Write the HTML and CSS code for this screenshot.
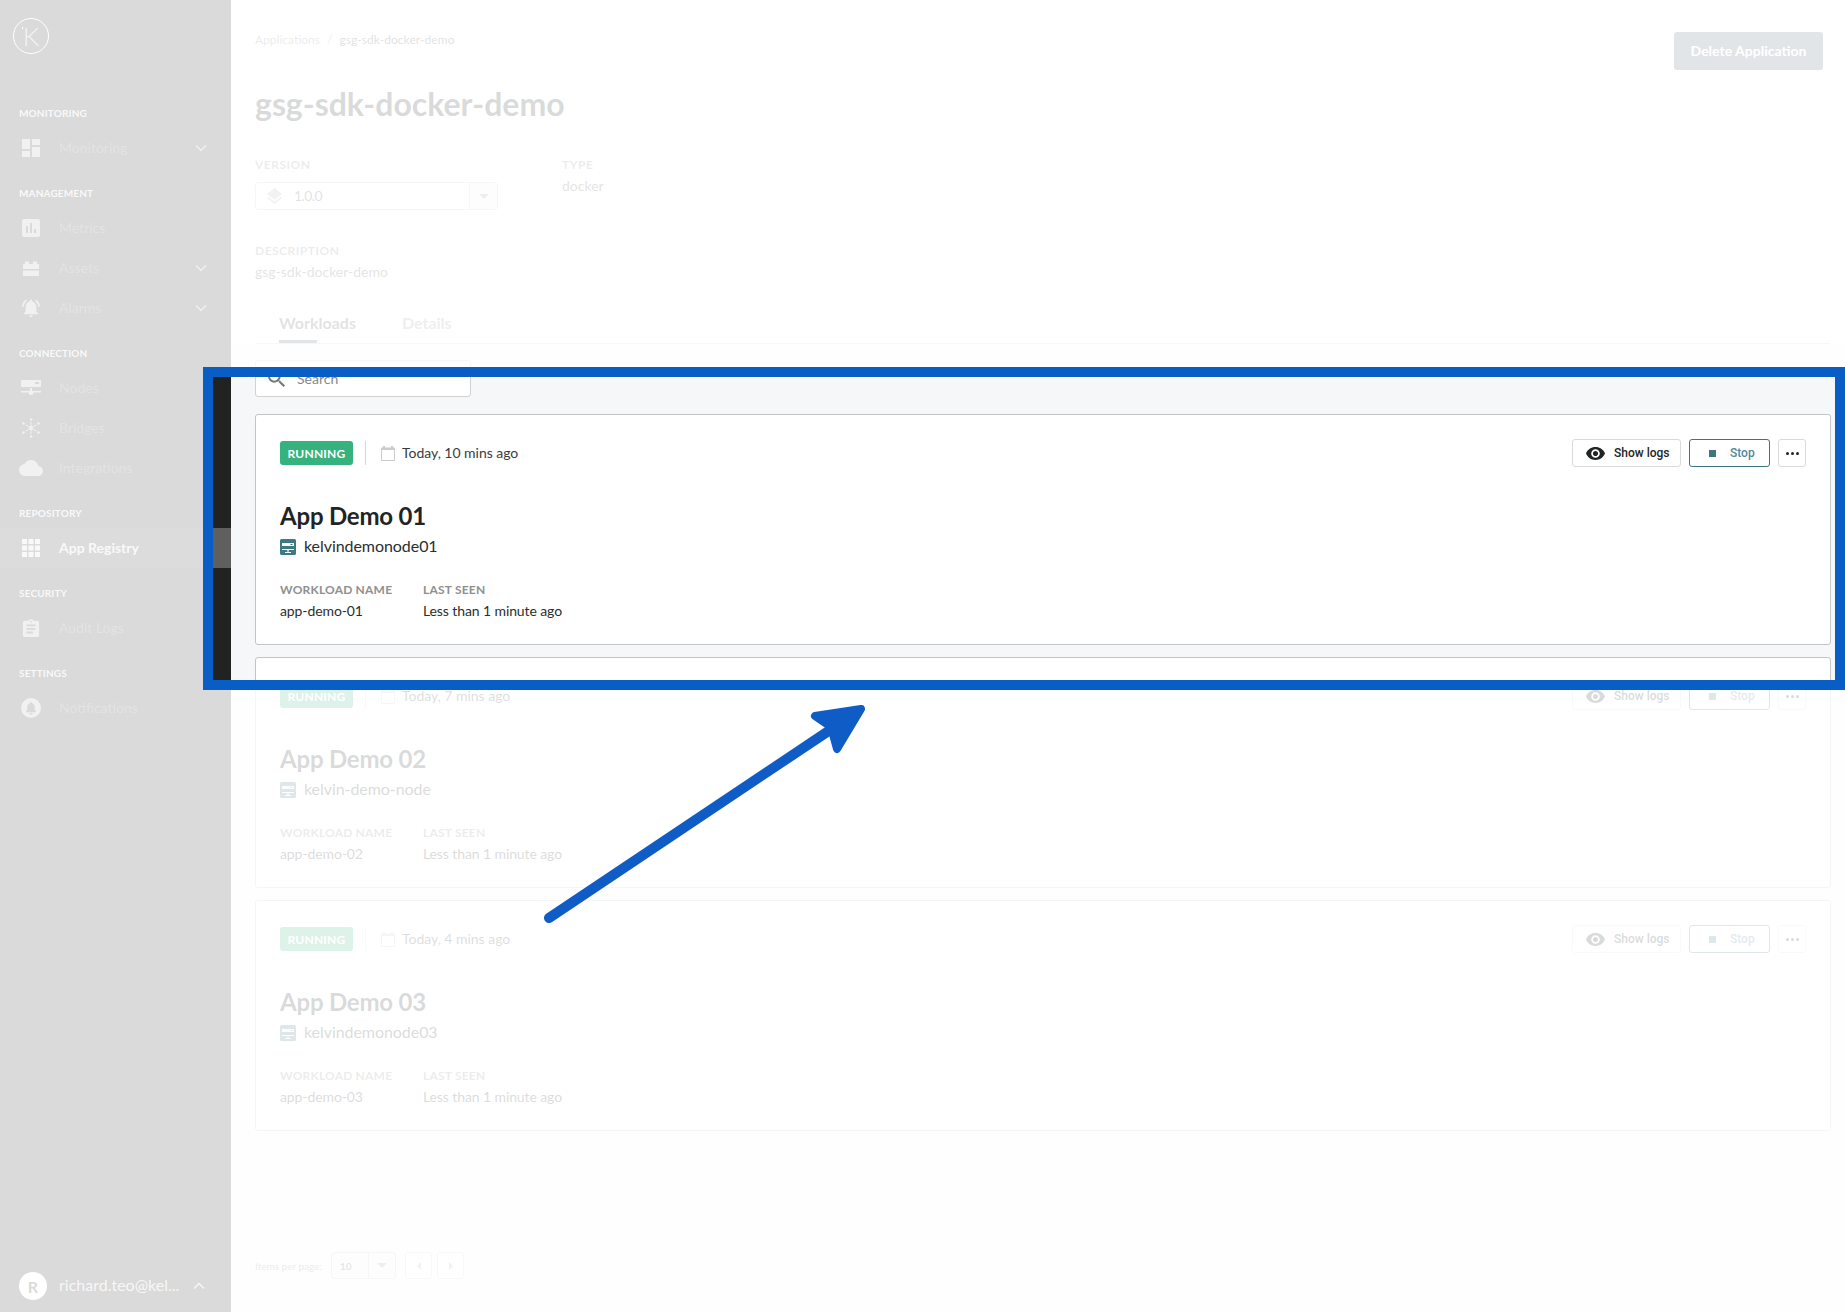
FILE: index.html
```html
<!DOCTYPE html>
<html lang="en">
<head>
<meta charset="utf-8">
<title>gsg-sdk-docker-demo</title>
<link rel="stylesheet" href="styles.css">
</head>
<body>
<svg class="defs" width="0" height="0" aria-hidden="true">
  <symbol id="i-dash" viewBox="3 3 18 18"><path d="M3 13h8V3H3v10zm0 8h8v-6H3v6zm10 0h8V11h-8v10zm0-18v6h8V3h-8z"/></symbol>
  <symbol id="i-metrics" viewBox="3 3 18 18"><path d="M19 3H5c-1.1 0-2 .9-2 2v14c0 1.1.9 2 2 2h14c1.1 0 2-.9 2-2V5c0-1.1-.9-2-2-2zM9 17H7v-7h2v7zm4 0h-2V7h2v10zm4 0h-2v-4h2v4z"/></symbol>
  <symbol id="i-assets" viewBox="0 0 16 16"><path d="M0 4h2V1.500h4V4h4V1.500h4V4h2v5H0zM0 10.500h16V16H0z"/></symbol>
  <symbol id="i-alarm" viewBox="2 2 20 20"><path d="M7.58 4.08L6.15 2.65C3.75 4.48 2.17 7.3 2.03 10.5h2c.15-2.65 1.51-4.97 3.55-6.42zm12.39 6.42h2c-.15-3.2-1.73-6.02-4.12-7.85l-1.42 1.43c2.02 1.45 3.39 3.77 3.54 6.42zM18 11c0-3.07-1.64-5.64-4.5-6.32V4c0-.83-.67-1.5-1.5-1.5s-1.5.67-1.5 1.5v.68C7.63 5.36 6 7.92 6 11v5l-2 2v1h16v-1l-2-2v-5zm-6 11c.14 0 .27-.01.4-.04.65-.14 1.18-.58 1.44-1.18.1-.24.15-.5.15-.78h-4c.01 1.1.9 2 2.01 2z"/></symbol>
  <symbol id="i-nodes" viewBox="0 0 20 16"><path d="M1 0h18a1 1 0 0 1 1 1v5a1 1 0 0 1-1 1H1a1 1 0 0 1-1-1V1a1 1 0 0 1 1-1zm13 2v2h4V2zM9 8h2v3h9v1.500H12.500a2.500 2.500 0 0 1-5 0H0V11h9z"/></symbol>
  <symbol id="i-bridges" viewBox="0 0 20 20"><g stroke="currentColor" stroke-width="1"><path d="M10 4v12M4.500 6.800l11 6.400M15.500 6.800l-11 6.400"/></g><circle cx="10" cy="10" r="2"/><circle cx="10" cy="1.500" r="1.300"/><circle cx="10" cy="18.500" r="1.300"/><circle cx="2.500" cy="5.500" r="1.300"/><circle cx="17.500" cy="5.500" r="1.300"/><circle cx="2.500" cy="14.500" r="1.300"/><circle cx="17.500" cy="14.500" r="1.300"/></symbol>
  <symbol id="i-cloud" viewBox="0 4 24 16"><path d="M19.35 10.040C18.670 6.590 15.640 4 12 4 9.110 4 6.600 5.640 5.350 8.040 2.340 8.360 0 10.910 0 14c0 3.310 2.690 6 6 6h13c2.760 0 5-2.240 5-5 0-2.640-2.050-4.780-4.650-4.960z"/></symbol>
  <symbol id="i-apps" viewBox="0 0 18 18"><path d="M0 0h5v5H0zM6.500 0h5v5h-5zM13 0h5v5h-5zM0 6.500h5v5H0zM6.500 6.500h5v5h-5zM13 6.500h5v5h-5zM0 13h5v5H0zM6.500 13h5v5h-5zM13 13h5v5h-5z"/></symbol>
  <symbol id="i-audit" viewBox="3 1 18 20"><path d="M19 3h-4.180C14.400 1.840 13.300 1 12 1c-1.300 0-2.400.84-2.820 2H5c-1.100 0-2 .9-2 2v14c0 1.100.9 2 2 2h14c1.100 0 2-.9 2-2V5c0-1.100-.9-2-2-2zm-7 0c.55 0 1 .45 1 1s-.45 1-1 1-1-.45-1-1 .45-1 1-1zm2 14H7v-2h7v2zm3-4H7v-2h10v2zm0-4H7V7h10v2z"/></symbol>
  <symbol id="i-notif" viewBox="0 0 20 20"><path fill-rule="evenodd" d="M10 0a10 10 0 1 1 0 20 10 10 0 0 1 0-20zm0 4a1 1 0 0 0-1 1v.3C7.300 5.800 6.300 7.200 6.300 9v3L5 13.500v.8h10v-.8L13.700 12V9c0-1.800-1-3.200-2.700-3.700V5a1 1 0 0 0-1-1zm-1.500 11a1.500 1.500 0 0 0 3 0z"/></symbol>
  <symbol id="i-chev" viewBox="0 0 12 8"><path d="M1 1.500l5 5 5-5" fill="none" stroke="currentColor" stroke-width="1.500"/></symbol>
  <symbol id="i-layers" viewBox="3 2 18 19.100"><path d="M11.990 18.540l-7.370-5.730L3 14.070l9 7 9-7-1.630-1.270-7.380 5.740zM12 16l7.360-5.730L21 9l-9-7-9 7 1.630 1.270L12 16z"/></symbol>
  <symbol id="i-search" viewBox="3 3 17.500 17.500"><path d="M15.500 14h-.79l-.28-.27C15.410 12.590 16 11.110 16 9.500 16 5.910 13.090 3 9.500 3S3 5.910 3 9.500 5.910 16 9.500 16c1.610 0 3.090-.59 4.230-1.570l.27.28v.79l5 4.990L20.490 19l-4.990-5zm-6 0C7.010 14 5 11.990 5 9.500S7.010 5 9.500 5 14 7.010 14 9.500 11.990 14 9.500 14z"/></symbol>
  <symbol id="i-cal" viewBox="0 0 14 15"><path fill-rule="evenodd" d="M2 0h2v1.500h6V0h2v1.500h1a1 1 0 0 1 1 1V14a1 1 0 0 1-1 1H1a1 1 0 0 1-1-1V2.500a1 1 0 0 1 1-1h1zM1 4v10h12V4z"/></symbol>
  <symbol id="i-node" viewBox="0 0 16 16"><path fill-rule="evenodd" d="M1.500 0h13A1.500 1.500 0 0 1 16 1.500v13a1.500 1.500 0 0 1-1.500 1.500h-13A1.500 1.500 0 0 1 0 14.500v-13A1.500 1.500 0 0 1 1.500 0zM2 4v3h12V4zm8.500 1h2v1h-2zM2 10v1h5.100a1 1 0 0 0 .4.800V13H5v1h6v-1H8.500v-1.200a1 1 0 0 0 .4-.8H14v-1z"/></symbol>
  <symbol id="i-eye" viewBox="1 4.500 22 15"><path d="M12 4.500C7 4.500 2.730 7.610 1 12c1.730 4.390 6 7.500 11 7.500s9.270-3.110 11-7.500c-1.730-4.390-6-7.500-11-7.500zM12 17c-2.760 0-5-2.240-5-5s2.240-5 5-5 5 2.240 5 5-2.240 5-5 5zm0-8c-1.660 0-3 1.340-3 3s1.340 3 3 3 3-1.340 3-3-1.340-3-3-3z"/></symbol>
</svg>

<div class="app">
  <aside class="sidebar">
    <div class="logo-area"><span class="logo"><i class="logo-dot"></i><span class="logo-k">K</span></span></div>
    <div class="nav">
      <div class="nav-label">MONITORING</div>
      <div class="nav-item"><svg class="nav-icon"><use href="#i-dash"/></svg><span class="nav-text">Monitoring</span><svg class="nav-chev"><use href="#i-chev"/></svg></div>
      <div class="nav-label">MANAGEMENT</div>
      <div class="nav-item"><svg class="nav-icon"><use href="#i-metrics"/></svg><span class="nav-text">Metrics</span></div>
      <div class="nav-item"><svg class="nav-icon nav-icon-sm"><use href="#i-assets"/></svg><span class="nav-text">Assets</span><svg class="nav-chev"><use href="#i-chev"/></svg></div>
      <div class="nav-item"><svg class="nav-icon"><use href="#i-alarm"/></svg><span class="nav-text">Alarms</span><svg class="nav-chev"><use href="#i-chev"/></svg></div>
      <div class="nav-label">CONNECTION</div>
      <div class="nav-item"><svg class="nav-icon nav-icon-wide"><use href="#i-nodes"/></svg><span class="nav-text">Nodes</span></div>
      <div class="nav-item"><svg class="nav-icon nav-icon-wide"><use href="#i-bridges"/></svg><span class="nav-text">Bridges</span></div>
      <div class="nav-item"><svg class="nav-icon nav-icon-cloud"><use href="#i-cloud"/></svg><span class="nav-text">Integrations</span></div>
      <div class="nav-label">REPOSITORY</div>
      <div class="nav-item nav-active"><svg class="nav-icon"><use href="#i-apps"/></svg><span class="nav-text">App Registry</span></div>
      <div class="nav-label">SECURITY</div>
      <div class="nav-item"><svg class="nav-icon"><use href="#i-audit"/></svg><span class="nav-text">Audit Logs</span></div>
      <div class="nav-label">SETTINGS</div>
      <div class="nav-item"><svg class="nav-icon nav-icon-wide"><use href="#i-notif"/></svg><span class="nav-text">Notifications</span></div>
    </div>
    <div class="user">
      <span class="avatar">R</span>
      <span class="user-name">richard.teo@kel...</span>
      <svg class="user-chev"><use href="#i-chev"/></svg>
    </div>
  </aside>

  <main class="main">
    <section class="top">
      <div class="head">
        <div class="crumbs"><span>Applications</span><span class="crumb-sep">/</span><span class="crumb-cur">gsg-sdk-docker-demo</span></div>
        <button class="btn-delete">Delete Application</button>
      </div>
      <h1 class="title">gsg-sdk-docker-demo</h1>
      <div class="meta">
        <div class="meta-version">
          <div class="meta-label">VERSION</div>
          <div class="select">
            <svg class="select-icon"><use href="#i-layers"/></svg>
            <span class="select-val">1.0.0</span>
            <span class="select-caret"><i class="caret"></i></span>
          </div>
        </div>
        <div>
          <div class="meta-label">TYPE</div>
          <div class="meta-val">docker</div>
        </div>
      </div>
      <div class="meta-label desc-label">DESCRIPTION</div>
      <div class="meta-val">gsg-sdk-docker-demo</div>
      <div class="tabs">
        <div class="tab tab-on">Workloads<div class="tab-bar"></div></div>
        <div class="tab">Details</div>
      </div>
    </section>

    <section class="content">
      <div class="search"><svg class="search-icon"><use href="#i-search"/></svg><span class="search-text">Search</span></div>

      <div class="cards">
        <article class="card">
          <div class="card-top">
            <span class="badge">RUNNING</span>
            <span class="vline"></span>
            <svg class="cal"><use href="#i-cal"/></svg>
            <span class="when">Today, 10 mins ago</span>
            <div class="actions">
              <button class="btn btn-logs"><svg class="eye"><use href="#i-eye"/></svg>Show logs</button>
              <button class="btn btn-stop"><i class="stop-sq"></i>Stop</button>
              <button class="btn btn-more"><i class="dot"></i><i class="dot"></i><i class="dot"></i></button>
            </div>
          </div>
          <h2 class="card-title">App Demo 01</h2>
          <div class="card-node"><svg class="node-icon"><use href="#i-node"/></svg><span class="node-name">kelvindemonode01</span></div>
          <div class="fields">
            <div class="field-a"><div class="f-label">WORKLOAD NAME</div><div class="f-val">app-demo-01</div></div>
            <div><div class="f-label">LAST SEEN</div><div class="f-val">Less than 1 minute ago</div></div>
          </div>
        </article>

        <article class="card">
          <div class="card-top">
            <span class="badge">RUNNING</span>
            <span class="vline"></span>
            <svg class="cal"><use href="#i-cal"/></svg>
            <span class="when">Today, 7 mins ago</span>
            <div class="actions">
              <button class="btn btn-logs"><svg class="eye"><use href="#i-eye"/></svg>Show logs</button>
              <button class="btn btn-stop"><i class="stop-sq"></i>Stop</button>
              <button class="btn btn-more"><i class="dot"></i><i class="dot"></i><i class="dot"></i></button>
            </div>
          </div>
          <h2 class="card-title">App Demo 02</h2>
          <div class="card-node"><svg class="node-icon"><use href="#i-node"/></svg><span class="node-name">kelvin-demo-node</span></div>
          <div class="fields">
            <div class="field-a"><div class="f-label">WORKLOAD NAME</div><div class="f-val">app-demo-02</div></div>
            <div><div class="f-label">LAST SEEN</div><div class="f-val">Less than 1 minute ago</div></div>
          </div>
        </article>

        <article class="card">
          <div class="card-top">
            <span class="badge">RUNNING</span>
            <span class="vline"></span>
            <svg class="cal"><use href="#i-cal"/></svg>
            <span class="when">Today, 4 mins ago</span>
            <div class="actions">
              <button class="btn btn-logs"><svg class="eye"><use href="#i-eye"/></svg>Show logs</button>
              <button class="btn btn-stop"><i class="stop-sq"></i>Stop</button>
              <button class="btn btn-more"><i class="dot"></i><i class="dot"></i><i class="dot"></i></button>
            </div>
          </div>
          <h2 class="card-title">App Demo 03</h2>
          <div class="card-node"><svg class="node-icon"><use href="#i-node"/></svg><span class="node-name">kelvindemonode03</span></div>
          <div class="fields">
            <div class="field-a"><div class="f-label">WORKLOAD NAME</div><div class="f-val">app-demo-03</div></div>
            <div><div class="f-label">LAST SEEN</div><div class="f-val">Less than 1 minute ago</div></div>
          </div>
        </article>
      </div>

      <div class="pager">
        <span class="pager-label">Items per page:</span>
        <div class="pager-select"><span class="pager-val">10</span><span class="pager-caret"><i class="caret"></i></span></div>
        <button class="pager-btn"><i class="tri tri-l"></i></button>
        <button class="pager-btn"><i class="tri tri-r"></i></button>
      </div>
    </section>
  </main>
</div>

<div class="spotlight"></div>
<svg class="arrow" viewBox="0 0 1845 1312" aria-hidden="true">
  <path class="arrow-line" d="M549 918L836 726"/>
  <path class="arrow-head" d="M815 716L861 709L837 749L831 727z"/>
</svg>
</body>
</html>
```

FILE: styles.css
```css
* { box-sizing: border-box; }
html, body { margin: 0; height: 100%; }
body {
  position: relative;
  height: 100vh;
  overflow: hidden;
  background: #fff;
  font-family: Lato, "Open Sans", sans-serif;
  color: #222423;
}
.defs { position: absolute; }
button { font-family: inherit; cursor: default; }
h1, h2 { margin: 0; }
i { display: block; }

.app { display: flex; height: 100vh; }

/* sidebar */
.sidebar {
  width: 231px;
  flex: none;
  display: flex;
  flex-direction: column;
  background: #212322;
  color: #fff;
}
.logo-area { height: 88px; padding: 18px 0 0 13px; }
.logo {
  position: relative;
  display: flex;
  align-items: center;
  justify-content: center;
  width: 36px;
  height: 36px;
  border: 1px solid #fff;
  border-radius: 50%;
}
.logo-k { font-size: 26px; font-weight: 300; line-height: 1; color: #bbb; }
.logo-dot { position: absolute; left: 8px; top: 8px; width: 1px; height: 2px; background: #fff; }
.nav { flex: 1; }
.nav-label {
  height: 40px;
  padding: 20px 0 0 19px;
  font-size: 10px;
  line-height: 10px;
  letter-spacing: .15px;
  font-weight: 700;
  color: #dcdcdc;
}
.nav-item {
  display: flex;
  align-items: center;
  height: 40px;
  padding-left: 22px;
  color: #a9a9a9;
  font-size: 14px;
}
.nav-icon { width: 18px; height: 18px; fill: #aaa; flex: none; color: #aaa; }
.nav-icon-sm { width: 16px; height: 16px; margin-left: 1px; margin-right: 1px; }
.nav-icon-wide { width: 20px; height: 20px; margin-left: -1px; margin-right: -1px; }
.nav-icon-cloud { width: 24px; height: 16px; margin-left: -3px; margin-right: -3px; }
.nav-text { margin-left: 19px; padding-bottom: 2px; color: #5a5b5b; }
.nav-chev { width: 12px; height: 8px; margin-left: auto; margin-right: 24px; color: #aaa; }
.nav-active { background: linear-gradient(90deg, #2f3130 0 88%, #5e5f5e 88%); }
.nav-active .nav-icon { fill: #ddd; }
.nav-active .nav-text { color: #dcdcdc; font-weight: 700; }

.user { display: flex; align-items: center; height: 28px; margin: 0 0 12px 19px; }
.avatar {
  display: flex;
  align-items: center;
  justify-content: center;
  width: 28px;
  height: 28px;
  border-radius: 50%;
  background: #fff;
  color: #212322;
  font-size: 16px;
  font-weight: 700;
  flex: none;
}
.user-name {
  width: 124px;
  margin-left: 12px;
  padding-bottom: 3px;
  font-size: 16px;
  color: #cfcfcf;
  white-space: nowrap;
}
.user-chev { width: 12px; height: 8px; margin-left: 10px; color: #cfcfcf; transform: rotate(180deg); }

/* main */
.main { flex: 1; min-width: 0; display: flex; flex-direction: column; }
.top { flex: none; height: 344px; padding: 32px 22px 0 24px; background: #fff; }
.head { display: flex; justify-content: space-between; align-items: flex-start; height: 38px; }
.crumbs { font-size: 12px; line-height: 16px; color: #8a8a8a; }
.crumb-sep { margin: 0 7px; }
.crumb-cur { color: #4d4d4d; letter-spacing: .06px; }
.btn-delete {
  width: 149px;
  height: 38px;
  padding: 0 0 2px;
  border: 0;
  border-radius: 3px;
  background: #4e6672;
  color: #fff;
  font-size: 14px;
  font-weight: 700;
}
.title { margin-top: 14px; font-size: 32px; line-height: 40px; font-weight: 700; color: #222423; }
.meta { display: flex; margin-top: 33px; }
.meta-version { width: 307px; }
.meta-label { font-size: 12px; line-height: 16px; font-weight: 700; letter-spacing: .5px; color: #8f8f8f; }
.meta-val { margin-top: 3px; font-size: 14px; line-height: 20px; color: #5e5e5e; }
.desc-label { margin-top: 33px; }
.select {
  display: flex;
  align-items: center;
  width: 243px;
  height: 28px;
  margin-top: 9px;
  border: 1px solid #c8cacb;
  border-radius: 3px;
  padding-left: 11px;
}
.select-icon { width: 15px; height: 16px; fill: #b0b0b0; }
.select-val { margin-left: 12px; padding-bottom: 2px; font-size: 14px; letter-spacing: -.6px; color: #555; }
.select-caret {
  display: flex;
  align-items: center;
  justify-content: center;
  width: 28px;
  height: 100%;
  margin-left: auto;
  border-left: 1px solid #c8cacb;
  background: #f2f3f4;
}
.caret { width: 0; height: 0; border: 5px solid transparent; border-top: 5px solid #9b9b9b; border-bottom: 0; }
.tabs {
  display: flex;
  gap: 46px;
  margin-top: 29px;
  height: 33px;
  padding-left: 24px;
  margin-right: -7px;
  border-bottom: 1px solid #cfd1d2;
}
.tab { font-size: 16px; line-height: 24px; font-weight: 700; color: #9a9a9a; }
.tab-on { color: #555; }
.tab-bar { width: 38px; height: 3px; margin-top: 5px; background: #4e6672; }

.content {
  flex: 1;
  display: flex;
  flex-direction: column;
  padding: 16px 14px 33px 24px;
  background: #f6f7f9;
}
.search {
  display: flex;
  align-items: center;
  width: 216px;
  height: 37px;
  padding-left: 12px;
  background: #fff;
  border: 1px solid #d0d2d3;
  border-radius: 3px;
  flex: none;
}
.search-icon { width: 17px; height: 17px; fill: #777; }
.search-text { margin-left: 12px; font-size: 14px; color: #888; }
.cards { display: flex; flex-direction: column; gap: 12px; margin-top: 17px; }
.card {
  height: 231px;
  padding: 24px 24px 0;
  background: #fff;
  border: 1px solid #c3c4c5;
  border-radius: 3px;
}
.card-top { display: flex; align-items: center; height: 28px; }
.badge {
  display: flex;
  align-items: center;
  justify-content: center;
  width: 73px;
  height: 24px;
  border-radius: 3px;
  background: #35b27d;
  color: #fff;
  font-size: 12px;
  font-weight: 700;
  letter-spacing: .2px;
}
.vline { width: 1px; height: 24px; margin: 0 15px 0 12px; background: #d5d6d7; }
.cal { width: 14px; height: 15px; fill: #c9cbcc; }
.when { margin-left: 7px; padding-bottom: 2px; font-size: 14px; letter-spacing: -.03px; color: #3a3b3b; }
.actions { display: flex; gap: 8px; margin-left: auto; }
.btn {
  display: flex;
  align-items: center;
  height: 28px;
  padding: 0;
  border: 1px solid #d9dadb;
  border-radius: 3px;
  background: #fff;
  font-family: Roboto, sans-serif;
  font-size: 12px;
  font-weight: 500;
  color: #222423;
}
.btn-logs { width: 109px; padding-left: 13px; }
.eye { width: 19px; height: 13px; margin-right: 9px; fill: #222423; }
.btn-stop { width: 81px; padding-left: 19px; border-color: #3f7580; color: #52889b; }
.stop-sq { width: 7px; height: 7px; margin-right: 14px; background: #3f7580; }
.btn-more { width: 28px; justify-content: center; gap: 2px; }
.dot { width: 3px; height: 3px; border-radius: 50%; background: #222423; }
.card-title { margin-top: 33px; font-size: 24px; line-height: 32px; font-weight: 700; letter-spacing: -.2px; color: #222423; }
.card-node { display: flex; align-items: center; height: 20px; margin-top: 5px; font-size: 16px; line-height: 20px; color: #2c2e2d; }
.node-name { padding-bottom: 2px; letter-spacing: -.06px; }
.node-icon { width: 16px; height: 16px; margin-right: 8px; fill: #3e7a85; }
.fields { display: flex; margin-top: 25px; }
.field-a { width: 143px; }
.f-label { font-size: 12px; line-height: 16px; font-weight: 700; letter-spacing: .2px; color: #8f8f8f; }
.f-val { margin-top: 3px; font-size: 14px; line-height: 20px; letter-spacing: -.1px; color: #2c2e2d; }

.pager { display: flex; align-items: center; margin-top: auto; height: 27px; }
.pager-label { width: 76px; font-size: 10px; color: #8a8a8a; }
.pager-select {
  display: flex;
  align-items: center;
  width: 65px;
  height: 27px;
  border: 1px solid #c8cacb;
  border-radius: 3px;
  background: #f2f3f4;
}
.pager-val { width: 36px; padding-left: 8px; font-size: 10px; font-weight: 700; color: #666; }
.pager-caret { display: flex; align-items: center; justify-content: center; flex: 1; height: 100%; border-left: 1px solid #c8cacb; }
.pager-btn {
  display: flex;
  align-items: center;
  justify-content: center;
  width: 27px;
  height: 27px;
  margin-left: 5px;
  padding: 0;
  border: 1px solid #d4d6d7;
  border-radius: 3px;
  background: #fff;
}
.pager-select + .pager-btn { margin-left: 9px; }
.tri { width: 0; height: 0; border: 4.500px solid transparent; }
.tri-l { border-right-color: #aaa; border-left: 0; }
.tri-r { border-left-color: #aaa; border-right: 0; }

/* annotation layer */
.spotlight {
  position: absolute;
  left: 203px;
  top: 367px;
  right: 0;
  height: 323px;
  border: 10px solid #085ec5;
  box-shadow: 0 0 0 2000px rgba(255, 255, 255, .83);
}
.arrow { position: absolute; left: 0; top: 0; width: 1845px; height: 1312px; pointer-events: none; filter: blur(.4px); }
.arrow-line { fill: none; stroke: #0f5cc6; stroke-width: 10; stroke-linecap: round; }
.arrow-head { fill: #0f5cc6; stroke: #0f5cc6; stroke-width: 8; stroke-linejoin: round; }
```
